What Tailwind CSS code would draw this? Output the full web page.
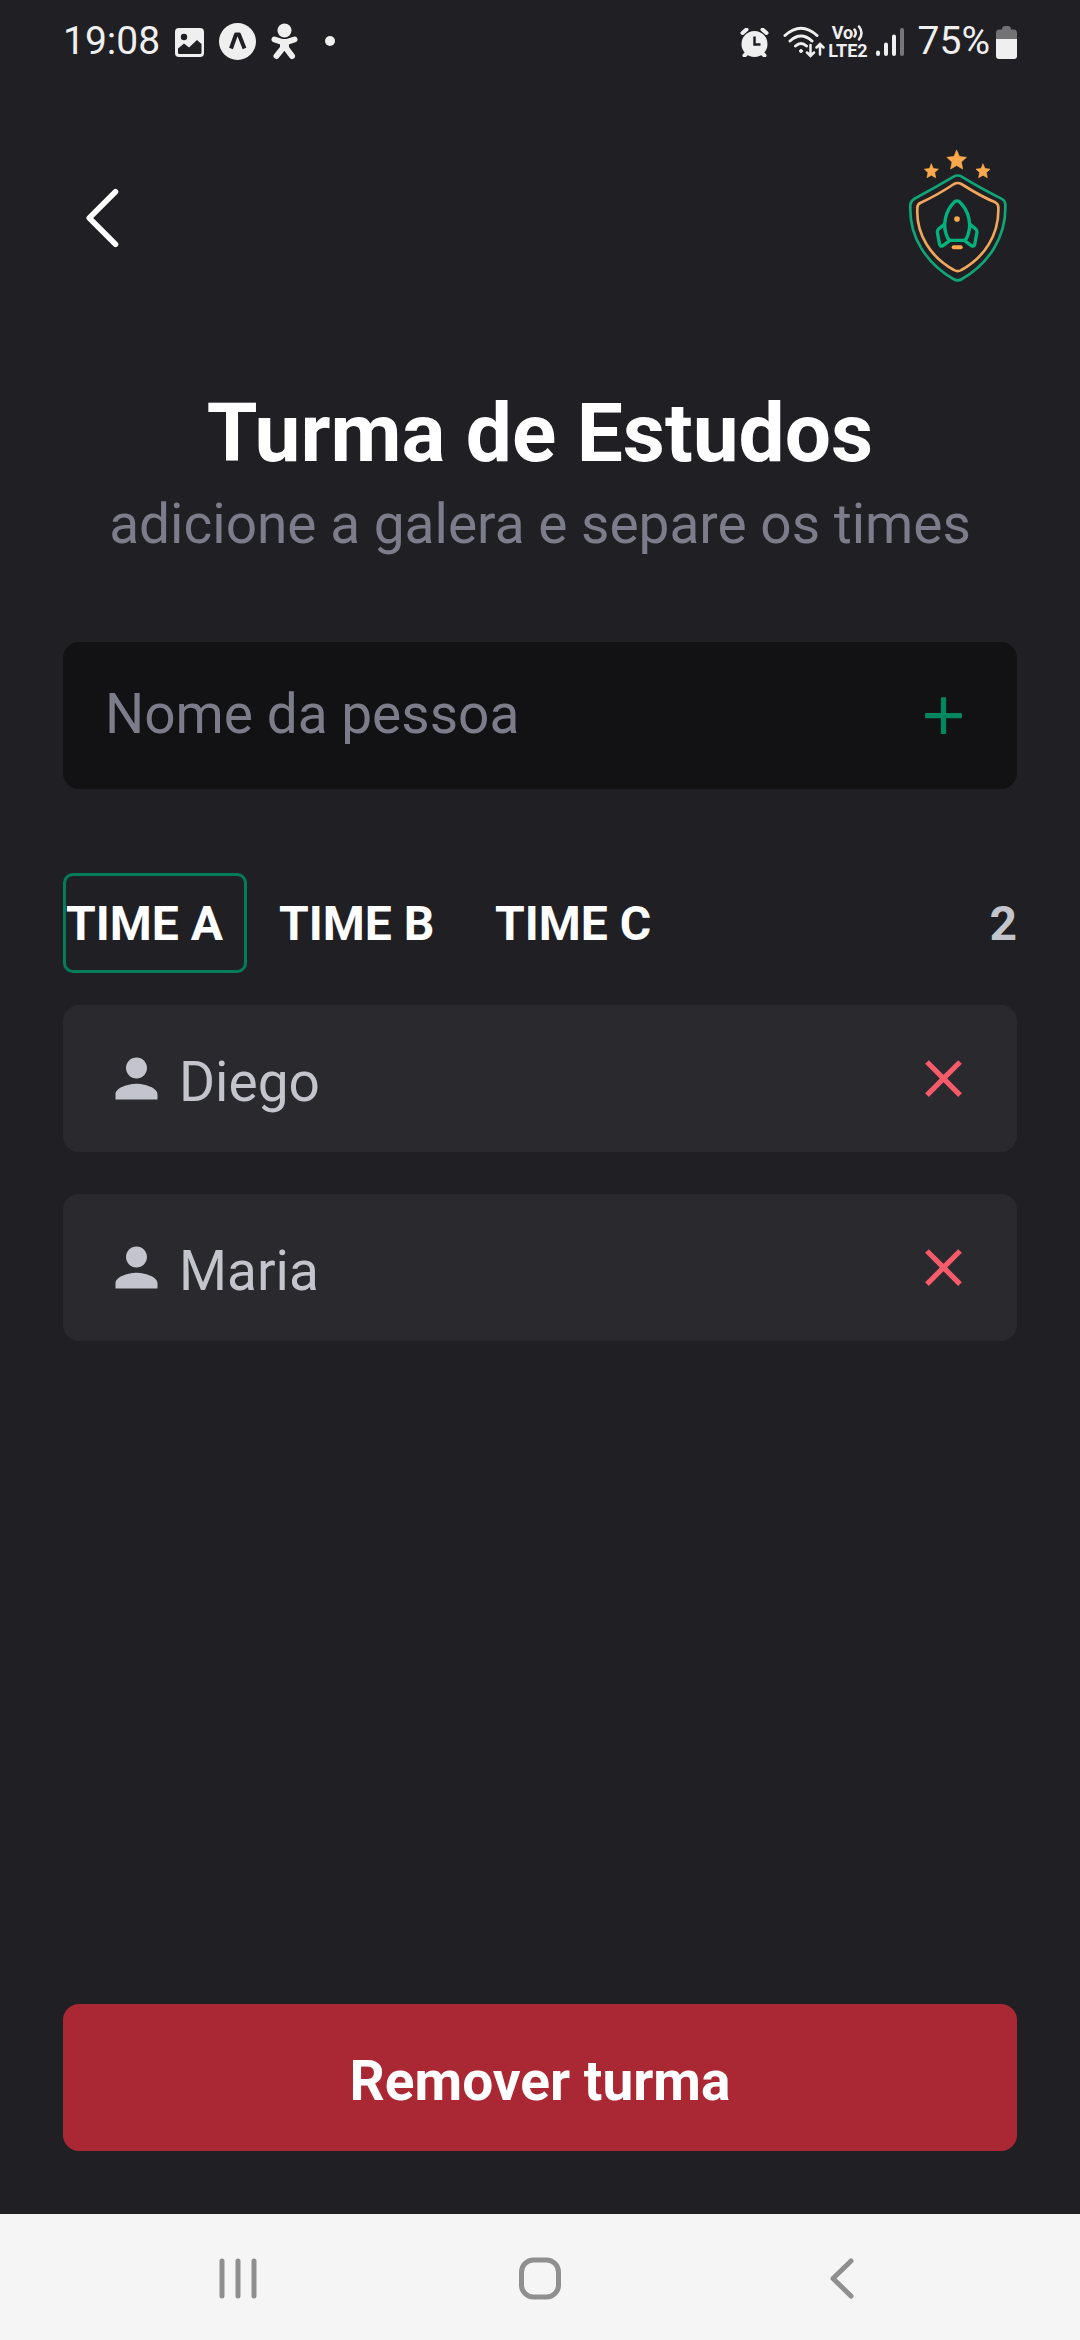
<!DOCTYPE html>
<html lang="pt-BR">
<head>
<meta charset="utf-8">
<meta name="viewport" content="width=device-width, initial-scale=1">
<title>Turma de Estudos</title>
<script src="https://cdn.jsdelivr.net/npm/@tailwindcss/browser@4"></script>
</head>
<body class="flex min-h-screen flex-col bg-[#202024] font-['Roboto',sans-serif] text-white">

<!-- Status bar -->
<div class="flex h-[82px] items-center justify-between px-[63px] text-[39px] leading-[48px] text-[#efefef]">
  <div class="flex items-center gap-[15px]">
    <span>19:08</span>
    <svg class="mt-0.5 size-[29px]" viewBox="0 0 29 29"><rect width="29" height="29" rx="4" fill="#efefef"/><circle cx="9" cy="9" r="3.2" fill="#202024"/><path d="M3 20.5l6-5 5 4 8-7.500 4.500 4V24.500a1.500 1.500 0 0 1-1.500 1.500H4.500A1.500 1.500 0 0 1 3 24.500z" fill="#202024"/></svg>
    <svg class="size-[37px]" viewBox="0 0 37 37"><circle cx="18.500" cy="18.500" r="18.500" fill="#efefef"/><path d="M12 25.500L17 11.500h3l5.500 14" fill="none" stroke="#202024" stroke-width="4" stroke-linejoin="round"/></svg>
    <svg class="h-[37px] w-[27px]" viewBox="0 0 27 37" fill="none" stroke="#efefef" stroke-width="6" stroke-linecap="round"><circle cx="13.500" cy="7.500" r="7" fill="#efefef" stroke="none"/><path d="M3.500 16.500l8 2.500h4l8-2.500M13.500 20v3L5.500 33M13.500 23l7.500 10"/><path d="M10 18h7v6h-7z" stroke-width="2" fill="#efefef"/></svg>
    <span class="ml-3 size-[10px] rounded-full bg-[#efefef]"></span>
  </div>
  <div class="flex items-center">
    <svg class="mt-0.5 size-[29px]" viewBox="0 0 29 29"><circle cx="14.500" cy="16" r="13" fill="#efefef"/><path d="M2.500 5l4-3.500M26.500 5l-4-3.500M4.500 27.500l3-3M24.500 27.500l-3-3" stroke="#efefef" stroke-width="4" stroke-linecap="round"/><path d="M14.500 8.500v8h6" fill="none" stroke="#202024" stroke-width="2.500"/></svg>
    <svg class="ml-[14px] mt-0.5 h-[32px] w-[42px]" viewBox="0 0 42 32" fill="none" stroke="#efefef" stroke-width="3" stroke-linecap="round"><path d="M2 9.500Q18 -5 34 9.500M7 15q11-10 22 0M12.500 20q5.500-5 11 0"/><circle cx="18" cy="25" r="1.500" fill="#efefef" stroke-width="1"/><path d="M27.500 19v10.500M24 26.500l3.500 3.500 3.500-3.500M37 28.500V19M33.500 21.500l3.500-3.500 3.500 3.500" stroke-width="2.500"/></svg>
    <div class="ml-[3px] mt-0.5 flex flex-col items-center text-[18px] leading-[18px] font-bold">
      <div class="flex items-center"><span>Vo</span><svg class="h-4 w-[11px]" viewBox="0 0 11 16" fill="none" stroke="#efefef" stroke-width="2.500" stroke-linecap="round"><path d="M1.500 4.500q2.500 3.500 0 7M6 1.500q5 6.500 0 13"/></svg></div>
      <span>LTE2</span>
    </div>
    <svg class="ml-2 mt-0.5 h-[30px] w-7" viewBox="0 0 28 30" stroke="#efefef" stroke-width="4" stroke-linecap="round"><path d="M2 25.500V27M10 17.500V27M18 9.500V27"/><path d="M26 3V27" stroke="#77777b"/></svg>
    <span class="ml-[14px]">75%</span>
    <svg class="ml-[6px] mt-0.5 h-[33px] w-[21px]" viewBox="0 0 21 33"><path d="M6 3.500Q6 0 9 0h3q3 0 3 3.500h3q3 0 3 3.500v7H0V7q0-3.500 3-3.500z" fill="#727275"/><path d="M0 13h21v17q0 3-3 3H3q-3 0-3-3z" fill="#efefef"/></svg>
  </div>
</div>

<main class="flex flex-1 flex-col px-[63px] pt-16 pb-[63px]">
  <!-- Header -->
  <header class="flex items-center justify-between">
    <button type="button" aria-label="Voltar" class="size-[84px]">
      <svg class="size-full" viewBox="0 0 256 256" fill="none" stroke="#fff" stroke-width="17" stroke-linecap="round" stroke-linejoin="round"><path d="M160 208L80 128l80-80"/></svg>
    </button>
    <svg class="h-[144px] w-[121px]" viewBox="46 48 363 432" fill="none" stroke-linejoin="round" stroke-linecap="round" role="img" aria-label="Ignite Teams">
      <g fill="#fba94c" stroke="#fba94c" stroke-width="2">
        <path d="M228 61l8.500 18.500 21 2.500-15.500 14 4 21-18-10.500-18 10.500 4-21-15.500-14 21-2.500z"/>
        <path d="M152 102l6 13.500 15 2-11 10 3 15.500-13-7.500-13 7.500 3-15.500-11-10 15-2z"/>
        <path d="M307 102l6 13.500 15 2-11 10 3 15.500-13-7.500-13 7.500 3-15.500-11-10 15-2z"/>
      </g>
      <path stroke="#10a577" stroke-width="8" d="M219 140Q231 133 243 140C280 163 318 184 362 206Q374 212 374 225C377 320 325 400 244 447Q231 455 218 447C137 400 85 320 89 228Q88 215 100 207C143 184 180 163 219 140z"/>
      <path stroke="#f0a75c" stroke-width="8" d="M220 162Q231 156 242 162C277 184 306 202 344 217Q353 222 353 232C356 315 310 383 242 420Q231 427 220 420C152 383 106 315 110 235Q109 223 120 218C156 202 187 184 220 162z"/>
      <g stroke="#00b37e" stroke-width="10">
        <path d="M222 215Q229 210 236 215C265 241 276 287 258 324Q255 331 248 331H211Q204 331 201 324C183 287 194 241 222 215z"/>
        <path d="M191 283L173 298Q169 302 170 307L177 344Q179 351 187 347L207 332M268 283L286 298Q290 302 289 307L282 344Q280 351 272 347L252 332"/>
      </g>
      <circle cx="229" cy="267" r="8.500" fill="#fba94c"/>
      <path stroke="#fba94c" stroke-width="12" d="M219 352h21"/>
    </svg>
  </header>

  <!-- Title -->
  <div class="mt-[88px] text-center">
    <h1 class="text-[82px] leading-[110px] font-bold">Turma de Estudos</h1>
    <p class="text-[55px] leading-[72px] text-[#7c7c8a]">adicione a galera e separe os times</p>
  </div>

  <!-- New person -->
  <form class="mt-[82px] flex h-[147px] items-center rounded-2xl bg-[#121214] px-[42px]">
    <input type="text" aria-label="Nome da pessoa" placeholder="Nome da pessoa" class="min-w-0 flex-1 bg-transparent pb-1 text-[55px] leading-[64px] text-white outline-none placeholder:text-[#7c7c8a]">
    <button type="button" aria-label="Adicionar" class="size-[63px]"><svg class="size-full" viewBox="0 0 24 24" fill="#00875f"><path d="M19 13h-6v6h-2v-6H5v-2h6V5h2v6h6v2z"/></svg></button>
  </form>

  <!-- Teams -->
  <div class="mt-[84px] flex items-center justify-between text-[48px] leading-[56px] font-bold">
    <div class="flex gap-8">
      <button type="button" aria-pressed="true" class="h-[100px] w-[184px] rounded-[10px] border-3 border-[#00875f]/90 pt-0.5 text-left whitespace-nowrap">TIME A</button>
      <button type="button" aria-pressed="false" class="h-[100px] w-[184px] rounded-[10px] pt-0.5 text-left whitespace-nowrap">TIME B</button>
      <button type="button" aria-pressed="false" class="h-[100px] w-[184px] rounded-[10px] pt-0.5 text-left whitespace-nowrap">TIME C</button>
    </div>
    <span class="pt-0.5 text-[#c4c4cc]">2</span>
  </div>

  <!-- Players -->
  <ul class="mt-8 flex flex-col gap-[42px] text-[55px] leading-[64px] text-[#c4c4cc]">
    <li class="flex h-[147px] items-center rounded-2xl bg-[#29292e] px-[42px]">
      <svg class="size-[63px]" viewBox="0 0 24 24" fill="#c4c4cc"><path d="M12 12c2.210 0 4-1.790 4-4s-1.790-4-4-4-4 1.790-4 4 1.790 4 4 4zm0 2c-2.670 0-8 1.340-8 4v2h16v-2c0-2.660-5.330-4-8-4z"/></svg>
      <span class="ml-[11px] flex-1 pt-1.5">Diego</span>
      <button type="button" aria-label="Remover Diego" class="size-[63px]"><svg class="size-full" viewBox="0 0 24 24" fill="#f75a68"><path d="M19 6.410L17.590 5 12 10.590 6.410 5 5 6.410 10.590 12 5 17.590 6.410 19 12 13.410 17.590 19 19 17.590 13.410 12z"/></svg></button>
    </li>
    <li class="flex h-[147px] items-center rounded-2xl bg-[#29292e] px-[42px]">
      <svg class="size-[63px]" viewBox="0 0 24 24" fill="#c4c4cc"><path d="M12 12c2.210 0 4-1.790 4-4s-1.790-4-4-4-4 1.790-4 4 1.790 4 4 4zm0 2c-2.670 0-8 1.340-8 4v2h16v-2c0-2.660-5.330-4-8-4z"/></svg>
      <span class="ml-[11px] flex-1 pt-1.5">Maria</span>
      <button type="button" aria-label="Remover Maria" class="size-[63px]"><svg class="size-full" viewBox="0 0 24 24" fill="#f75a68"><path d="M19 6.410L17.590 5 12 10.590 6.410 5 5 6.410 10.590 12 5 17.590 6.410 19 12 13.410 17.590 19 19 17.590 13.410 12z"/></svg></button>
    </li>
  </ul>

  <button type="button" class="mt-auto h-[147px] w-full rounded-2xl bg-[#aa2834] pt-1.5 text-[55px] leading-[64px] font-bold">Remover turma</button>
</main>

<!-- Navigation bar -->
<nav class="flex h-[126px] items-center justify-center bg-[#f5f5f5]">
  <div class="grid w-[84%] grid-cols-3 justify-items-center pt-0.5">
    <button type="button" aria-label="Recentes"><svg class="h-[44px] w-[42px]" viewBox="0 0 42 44" stroke="#8f8f8f" stroke-width="5" stroke-linecap="round"><path d="M5 5v35M21 5v35M37 5v35"/></svg></button>
    <button type="button" aria-label="Início"><svg class="h-[44px] w-[42px]" viewBox="0 0 42 44" fill="none" stroke="#8f8f8f" stroke-width="5"><rect x="2.500" y="4" width="37" height="37" rx="12"/></svg></button>
    <button type="button" aria-label="Voltar"><svg class="h-[44px] w-[42px]" viewBox="0 0 42 44" fill="none" stroke="#8f8f8f" stroke-width="5" stroke-linecap="round" stroke-linejoin="round"><path d="M30 5L12 22.500 30 40"/></svg></button>
  </div>
</nav>
</body>
</html>
